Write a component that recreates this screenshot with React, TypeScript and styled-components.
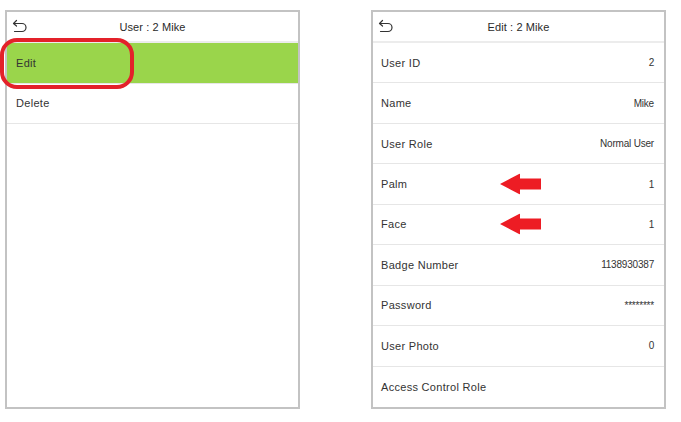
import React from 'react'
import styled, { createGlobalStyle } from 'styled-components'

const GlobalStyle = createGlobalStyle`
  html, body {
    margin: 0;
    padding: 0;
    background: #ffffff;
  }
  body {
    font-family: "Liberation Sans", Arial, sans-serif;
  }
`

interface Field {
  label: string
  value?: string
  marked?: boolean
}

const fields: Field[] = [
  { label: 'User ID', value: '2' },
  { label: 'Name', value: 'Mike' },
  { label: 'User Role', value: 'Normal User' },
  { label: 'Palm', value: '1', marked: true },
  { label: 'Face', value: '1', marked: true },
  { label: 'Badge Number', value: '1138930387' },
  { label: 'Password', value: '********' },
  { label: 'User Photo', value: '0' },
  { label: 'Access Control Role' },
]

const BackIcon = () => (
  <svg width="15" height="14" viewBox="0 0 15 14" fill="none">
    <path
      d="M2 4.5 H10 A4 4 0 0 1 10 12.5 H2.5"
      stroke="#333"
      strokeWidth="1.2"
      strokeLinecap="round"
    />
    <path d="M4.5 1.5 L1.5 4.5 L4.5 7" stroke="#333" strokeWidth="1.2" strokeLinecap="round" strokeLinejoin="round" />
  </svg>
)

const RedArrow = () => (
  <svg width="41" height="21" viewBox="0 0 41 21">
    <polygon points="0,10.5 20,0 20,5 41,5 41,16 20,16 20,21" fill="#ed1c24" />
  </svg>
)

const Header = ({ title }: { title: string }) => (
  <HeaderBar>
    <BackSlot>
      <BackIcon />
    </BackSlot>
    <Title>{title}</Title>
  </HeaderBar>
)

export default function App() {
  return (
    <>
      <GlobalStyle />
      <Page>
        <Panel>
          <Header title="User : 2 Mike" />
          <MenuRow active>Edit</MenuRow>
          <MenuRow>Delete</MenuRow>
          <Highlight />
        </Panel>

        <EditPanel>
          <Header title="Edit : 2 Mike" />
          {fields.map((f) => (
            <FieldRow key={f.label}>
              <span>{f.label}</span>
              {f.marked && (
                <ArrowMark>
                  <RedArrow />
                </ArrowMark>
              )}
              <FieldValue>{f.value}</FieldValue>
            </FieldRow>
          ))}
        </EditPanel>
      </Page>
    </>
  )
}

const Page = styled.div`
  display: flex;
  gap: 71px;
  padding: 10px 0 0 5px;
  width: 681px;
  height: 422px;
  box-sizing: border-box;
`

const Panel = styled.div`
  position: relative;
  width: 295px;
  height: 399px;
  box-sizing: border-box;
  border: 2px solid #c3c3c3;
  display: flex;
  flex-direction: column;
  background: #fff;
`

const EditPanel = styled(Panel)`
  display: grid;
  grid-template-rows: 31px repeat(9, 1fr);
`

const HeaderBar = styled.div`
  position: relative;
  height: 31px;
  flex: none;
  display: flex;
  align-items: center;
  justify-content: center;
  border-bottom: 2px solid #ececec;
  box-sizing: border-box;
`

const BackSlot = styled.div`
  position: absolute;
  left: 5px;
  top: 7px;
  display: flex;
`

const Title = styled.span`
  font-size: 11px;
  color: #2a2a2a;
  letter-spacing: 0.1px;
`

const MenuRow = styled.div<{ active?: boolean }>`
  height: 40.6px;
  flex: none;
  box-sizing: border-box;
  display: flex;
  align-items: center;
  padding-left: 9px;
  font-size: 11px;
  letter-spacing: 0.3px;
  color: #333;
  background: ${(p) => (p.active ? '#9ad54b' : '#fff')};
  border-bottom: 1px solid #e6e6e6;
`

const Highlight = styled.div`
  position: absolute;
  left: -7px;
  top: 26px;
  width: 134px;
  height: 51px;
  box-sizing: border-box;
  border: 4px solid #e3212a;
  border-radius: 17px;
  pointer-events: none;
`

const FieldRow = styled.div`
  position: relative;
  display: flex;
  align-items: center;
  justify-content: space-between;
  padding: 0 10px 0 8px;
  font-size: 11px;
  letter-spacing: 0.3px;
  color: #333;
  border-bottom: 1px solid #e6e6e6;
  &:last-child {
    border-bottom: none;
  }
`

const FieldValue = styled.span`
  font-size: 10px;
  letter-spacing: -0.2px;
  color: #333;
`

const ArrowMark = styled.div`
  position: absolute;
  left: 127px;
  top: 50%;
  transform: translateY(-50%);
  display: flex;
`
